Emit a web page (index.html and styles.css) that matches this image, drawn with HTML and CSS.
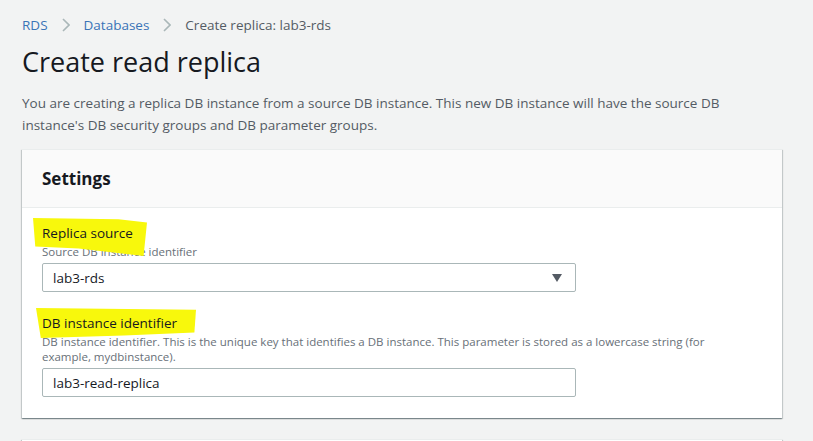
FILE: index.html
```html
<!DOCTYPE html>
<html lang="en">
<head>
<meta charset="utf-8">
<title>Create read replica</title>
<link rel="stylesheet" href="styles.css">
</head>
<body>
<main class="page">
  <nav class="crumbs">
    <a class="crumb-link" href="#">RDS</a>
    <svg class="chev" viewBox="0 0 8 14" width="8" height="14"><path d="M1 1l6 6-6 6" fill="none" stroke="#aab7b8" stroke-width="1.6"/></svg>
    <a class="crumb-link" href="#">Databases</a>
    <svg class="chev" viewBox="0 0 8 14" width="8" height="14"><path d="M1 1l6 6-6 6" fill="none" stroke="#aab7b8" stroke-width="1.6"/></svg>
    <span class="crumb-current">Create replica: lab3-rds</span>
  </nav>
  <h1 class="title">Create read replica</h1>
  <p class="intro">You are creating a replica DB instance from a source DB instance. This new DB instance will have the source DB instance's DB security groups and DB parameter groups.</p>

  <section class="card">
    <header class="card-head"><h2 class="card-title">Settings</h2></header>
    <div class="card-body">
      <div class="field">
        <label class="label hl hl-one">Replica source</label>
        <div class="hint">Source DB instance identifier</div>
        <div class="select">
          <span>lab3-rds</span>
          <svg class="caret" viewBox="0 0 10 8" width="10" height="8"><path d="M0 0h10L5 8z" fill="#545b64"/></svg>
        </div>
      </div>
      <div class="field field-gap">
        <label class="label hl hl-two">DB instance identifier</label>
        <div class="hint hint-wrap">DB instance identifier. This is the unique key that identifies a DB instance. This parameter is stored as a lowercase string (for example, mydbinstance).</div>
        <div class="input">lab3-read-replica</div>
      </div>
    </div>
  </section>
  <section class="card card-next"></section>
</main>
</body>
</html>
```
FILE: styles.css
```css
* { box-sizing: border-box; }
html, body { margin: 0; padding: 0; }
body {
  background: #f2f3f3;
  font-family: "Open Sans", "Noto Sans", sans-serif;
  color: #16191f;
  overflow: hidden;
}
.page {
  padding: 15px 31px 0 22px;
}
.crumbs {
  display: flex;
  align-items: center;
  height: 20px;
  font-size: 13.5px;
  line-height: 20px;
}
.crumb-link { color: #3a74b7; text-decoration: none; }
.chev { margin: 0 14px 0 14px; }
.crumb-current { color: #545b64; }
.title {
  margin: 9px 0 0;
  font-size: 27px;
  font-weight: 400;
  line-height: 36px;
  color: #16191f;
}
.intro {
  margin: 12px 0 0;
  max-width: 730px;
  font-size: 13.5px;
  line-height: 22px;
  color: #545b64;
}
.card {
  margin-top: 13px;
  background: #fff;
  box-shadow: 0 1px 1px 0 rgba(0,28,36,.3), 1px 1px 1px 0 rgba(0,28,36,.15), -1px 1px 1px 0 rgba(0,28,36,.15);
  border-top: 1px solid #eaeded;
}
.card-head {
  background: #fafafa;
  border-bottom: 1px solid #eaeded;
  height: 58px;
  padding: 0 20px;
  display: flex;
  align-items: center;
}
.card-title {
  margin: 0;
  font-size: 17px;
  font-weight: 700;
  color: #16191f;
}
.card-body {
  padding: 14px 20px 21px;
}
.field { display: flex; flex-direction: column; align-items: flex-start; }
.field-gap { margin-top: 20px; }
.label {
  display: inline-block;
  font-size: 13.5px;
  line-height: 22px;
  color: #16191f;
}
.hl { position: relative; z-index: 0; }
.hl::before {
  content: "";
  position: absolute;
  z-index: -1;
  background: #f8f80c;
}
.hl-one::before {
  left: -9px; top: -4px; width: 114px; height: 38px;
  clip-path: polygon(0 0, 75% 3%, 100% 12%, 97% 100%, 40% 80%, 2% 75%);
}
.hl-two::before {
  left: -6px; top: -4px; width: 160px; height: 30px;
  clip-path: polygon(0 0, 100% 6%, 99% 82%, 55% 92%, 3% 100%);
}
.hint {
  font-size: 11.5px;
  line-height: 15px;
  color: #687078;
}
.hint-wrap { max-width: 690px; }
.select, .input {
  margin-top: 4px;
  width: 534px;
  height: 29px;
  border: 1px solid #aab7b8;
  border-radius: 2px;
  padding: 0 10px;
  display: flex;
  align-items: center;
  font-size: 13.5px;
  color: #16191f;
  background: #fff;
}
.select { justify-content: space-between; }
.caret { margin-right: 3px; }
.card-next {
  margin-top: 21px;
  height: 40px;
}
```
